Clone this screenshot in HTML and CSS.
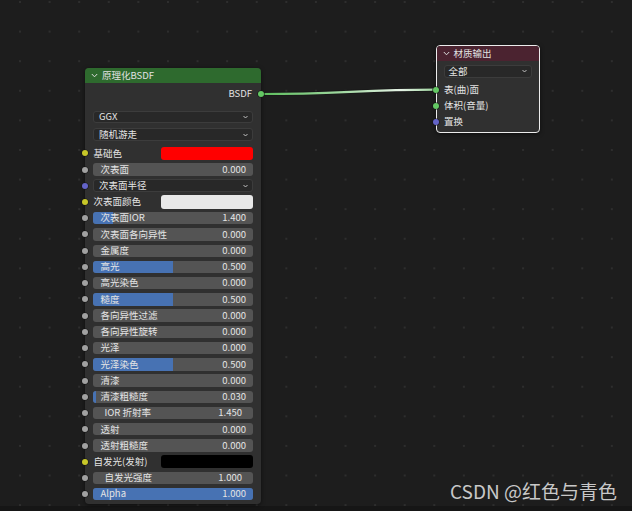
FILE: index.html
```html
<!DOCTYPE html>
<html lang="zh">
<head>
    <meta charset="UTF-8">
    <title>Shader Editor</title>
    <link rel="stylesheet" href="styles.css">
</head>
<body>

<div class="editor">
    <svg class="links" width="632" height="506">
        <defs>
            <linearGradient id="linkGrad" x1="261" y1="0" x2="436" y2="0" gradientUnits="userSpaceOnUse">
                <stop offset="0" stop-color="#5cbd5c"/>
                <stop offset="0.45" stop-color="#9fd89f"/>
                <stop offset="0.8" stop-color="#e6f3e6"/>
                <stop offset="1" stop-color="#9ad39a"/>
            </linearGradient>
        </defs>
        <path d="M261 94 C 340 94, 360 89.7, 436 89.7" stroke="#151515" stroke-width="4" fill="none" opacity="0.6"/>
        <path d="M261 94 C 340 94, 360 89.7, 436 89.7" stroke="url(#linkGrad)" stroke-width="2.2" fill="none"/>
    </svg>

    <!-- Principled BSDF -->
    <div class="node bsdf">
        <div class="node-head">
            <svg class="chev" width="7" height="5" viewBox="0 0 7 5"><polyline points="0.8,1 3.5,3.8 6.2,1" fill="none" stroke="#dcdcdc" stroke-width="1"/></svg>
            <span>原理化BSDF</span>
        </div>
        <div class="node-body">
            <div class="out-row"><span>BSDF</span><span class="sock green out"></span></div>
            <div class="select first"><span>GGX</span><svg class="dd" width="5" height="4" viewBox="0 0 5 4"><polyline points="0.5,1 2.5,3 4.5,1" fill="none" stroke="#cfcfcf" stroke-width="0.9"/></svg></div>
            <div class="select"><span>随机游走</span><svg class="dd" width="5" height="4" viewBox="0 0 5 4"><polyline points="0.5,1 2.5,3 4.5,1" fill="none" stroke="#cfcfcf" stroke-width="0.9"/></svg></div>

            <div class="rows">
                <div class="row"><span class="sock yellow"></span><span class="plain">基础色</span><span class="swatch red"></span></div>
                <div class="row"><span class="sock gray"></span><div class="field"><span class="lbl">次表面</span><span class="val">0.000</span></div></div>
                <div class="row"><span class="sock purple"></span><div class="select inrow"><span>次表面半径</span><svg class="dd" width="5" height="4" viewBox="0 0 5 4"><polyline points="0.5,1 2.5,3 4.5,1" fill="none" stroke="#cfcfcf" stroke-width="0.9"/></svg></div></div>
                <div class="row"><span class="sock yellow"></span><span class="plain">次表面颜色</span><span class="swatch white"></span></div>
                <div class="row"><span class="sock gray"></span><div class="field"><span class="fill" style="width:12.3%"></span><span class="lbl">次表面IOR</span><span class="val">1.400</span></div></div>
                <div class="row"><span class="sock gray"></span><div class="field"><span class="lbl">次表面各向异性</span><span class="val">0.000</span></div></div>
                <div class="row"><span class="sock gray"></span><div class="field"><span class="lbl">金属度</span><span class="val">0.000</span></div></div>
                <div class="row"><span class="sock gray"></span><div class="field"><span class="fill" style="width:50%"></span><span class="lbl">高光</span><span class="val">0.500</span></div></div>
                <div class="row"><span class="sock gray"></span><div class="field"><span class="lbl">高光染色</span><span class="val">0.000</span></div></div>
                <div class="row"><span class="sock gray"></span><div class="field"><span class="fill" style="width:50%"></span><span class="lbl">糙度</span><span class="val">0.500</span></div></div>
                <div class="row"><span class="sock gray"></span><div class="field"><span class="lbl">各向异性过滤</span><span class="val">0.000</span></div></div>
                <div class="row"><span class="sock gray"></span><div class="field"><span class="lbl">各向异性旋转</span><span class="val">0.000</span></div></div>
                <div class="row"><span class="sock gray"></span><div class="field"><span class="lbl">光泽</span><span class="val">0.000</span></div></div>
                <div class="row"><span class="sock gray"></span><div class="field"><span class="fill" style="width:50%"></span><span class="lbl">光泽染色</span><span class="val">0.500</span></div></div>
                <div class="row"><span class="sock gray"></span><div class="field"><span class="lbl">清漆</span><span class="val">0.000</span></div></div>
                <div class="row"><span class="sock gray"></span><div class="field"><span class="fill" style="width:1.6%"></span><span class="lbl">清漆粗糙度</span><span class="val">0.030</span></div></div>
                <div class="row"><span class="sock gray"></span><div class="field num"><span class="lbl">IOR 折射率</span><span class="val">1.450</span></div></div>
                <div class="row"><span class="sock gray"></span><div class="field"><span class="lbl">透射</span><span class="val">0.000</span></div></div>
                <div class="row"><span class="sock gray"></span><div class="field"><span class="lbl">透射粗糙度</span><span class="val">0.000</span></div></div>
                <div class="row"><span class="sock yellow"></span><span class="plain">自发光(发射)</span><span class="swatch black"></span></div>
                <div class="row"><span class="sock gray"></span><div class="field num"><span class="lbl">自发光强度</span><span class="val">1.000</span></div></div>
                <div class="row"><span class="sock gray"></span><div class="field"><span class="fill full" style="width:100%"></span><span class="lbl">Alpha</span><span class="val">1.000</span></div></div>
            </div>
        </div>
    </div>

    <!-- Material Output -->
    <div class="node output">
        <div class="node-head">
            <svg class="chev" width="7" height="5" viewBox="0 0 7 5"><polyline points="0.8,1 3.5,3.8 6.2,1" fill="none" stroke="#dcdcdc" stroke-width="1"/></svg>
            <span>材质输出</span>
        </div>
        <div class="node-body">
            <div class="select target"><span>全部</span><svg class="dd" width="5" height="4" viewBox="0 0 5 4"><polyline points="0.5,1 2.5,3 4.5,1" fill="none" stroke="#cfcfcf" stroke-width="0.9"/></svg></div>
            <div class="in-rows">
                <div class="in-row"><span class="sock green"></span>表(曲)面</div>
                <div class="in-row"><span class="sock green"></span>体积(音量)</div>
                <div class="in-row"><span class="sock purple"></span>置换</div>
            </div>
        </div>
    </div>

    <div class="watermark">CSDN @红色与青色</div>
</div>
<div class="statusbar"></div>

</body>
</html>
```

FILE: styles.css
```css
* { box-sizing: border-box; }
html, body { margin: 0; }
body { width: 632px; height: 511px; overflow: hidden; display: flex; flex-direction: column; background: #1d1d1d; font-family: "Noto Sans CJK SC", sans-serif; font-size: 9.5px; color: #e4e4e4; }

/* Node canvas with dot grid */
.editor { position: relative; flex: 1; background-color: #1d1d1d; background-image: radial-gradient(circle, #2e2e2e 0.9px, transparent 1.4px); background-size: 29.6px 29.6px; background-position: 5.2px 16.8px; }
.statusbar { height: 5px; background: #161616; }
.links { position: absolute; left: 0; top: 0; }

/* Nodes */
.node { position: absolute; background: #303030; border-radius: 4px; box-shadow: 0 1px 4px rgba(0,0,0,0.55); }
.node-head { height: 15px; display: flex; align-items: center; gap: 4px; padding-left: 6px; border-radius: 4px 4px 0 0; color: #e2e2e2; line-height: 1; }
.node-body { position: relative; }

.bsdf { left: 85px; top: 68px; width: 176px; height: 436px; }
.bsdf .node-head { background: #2e6a2e; }
.bsdf .node-body { padding: 4px 8px 0; }

.output { left: 435.5px; top: 45px; width: 104px; height: 88px; border: 1px solid #ececec; }
.output .node-head { height: 15px; background: #4b2330; border-radius: 3px 3px 0 0; }
.output .node-body { padding: 3.7px 7px 0; }

/* Sockets */
.sock { position: absolute; width: 6px; height: 6px; border-radius: 50%; box-shadow: 0 0 0 0.6px #141414; top: 50%; margin-top: -3px; left: -11px; }
.sock.out { left: auto; right: -11px; }
.yellow { background: #c7c729; }
.gray { background: #a1a1a1; }
.purple { background: #6363c7; }
.green { background: #63c763; }

.out-row { position: relative; height: 14px; display: flex; align-items: center; justify-content: flex-end; padding-right: 1px; line-height: 1; }

/* Dropdowns */
.select { height: 12.6px; display: flex; align-items: center; justify-content: space-between; padding: 0 4px 0 5px; background: #282828; border: 1px solid #3c3c3c; border-radius: 3px; margin-top: 5px; line-height: 1; }
.select.first { margin-top: 9.7px; }
.select.inrow { flex: 1; margin-top: 0; height: 12.6px; }
.select.target { margin-top: 0; height: 13.3px; padding-left: 4px; }
.dd { flex: none; }

/* Input rows */
.rows { margin-top: 4.3px; }
.row { position: relative; height: 16.24px; display: flex; align-items: center; line-height: 1; }
.plain { padding-left: 0.5px; }
.swatch { margin-left: auto; width: 92px; height: 13.3px; border-radius: 3px; }
.red { background: #ff0000; }
.white { background: #e8e8e8; }
.black { background: #000000; }

.field { position: relative; flex: 1; height: 12.4px; display: flex; align-items: center; justify-content: space-between; padding: 0 7px 0 7.5px; background: #545454; border-radius: 3px; }
.field.num { padding: 0 11px 0 11.5px; }
.fill { position: absolute; left: 0; top: 0; bottom: 0; background: #4772b3; border-radius: 3px 0 0 3px; }
.fill.full { border-radius: 3px; }
.lbl, .val { position: relative; }

.in-rows { margin-top: 3.7px; }
.in-row { position: relative; height: 16px; display: flex; align-items: center; line-height: 1; padding-left: 0.5px; }
.in-row .sock { left: -10.5px; }

.watermark { position: absolute; left: 450px; top: 481px; font-size: 19px; color: #c8c8c8; line-height: 1; white-space: nowrap; }
```
